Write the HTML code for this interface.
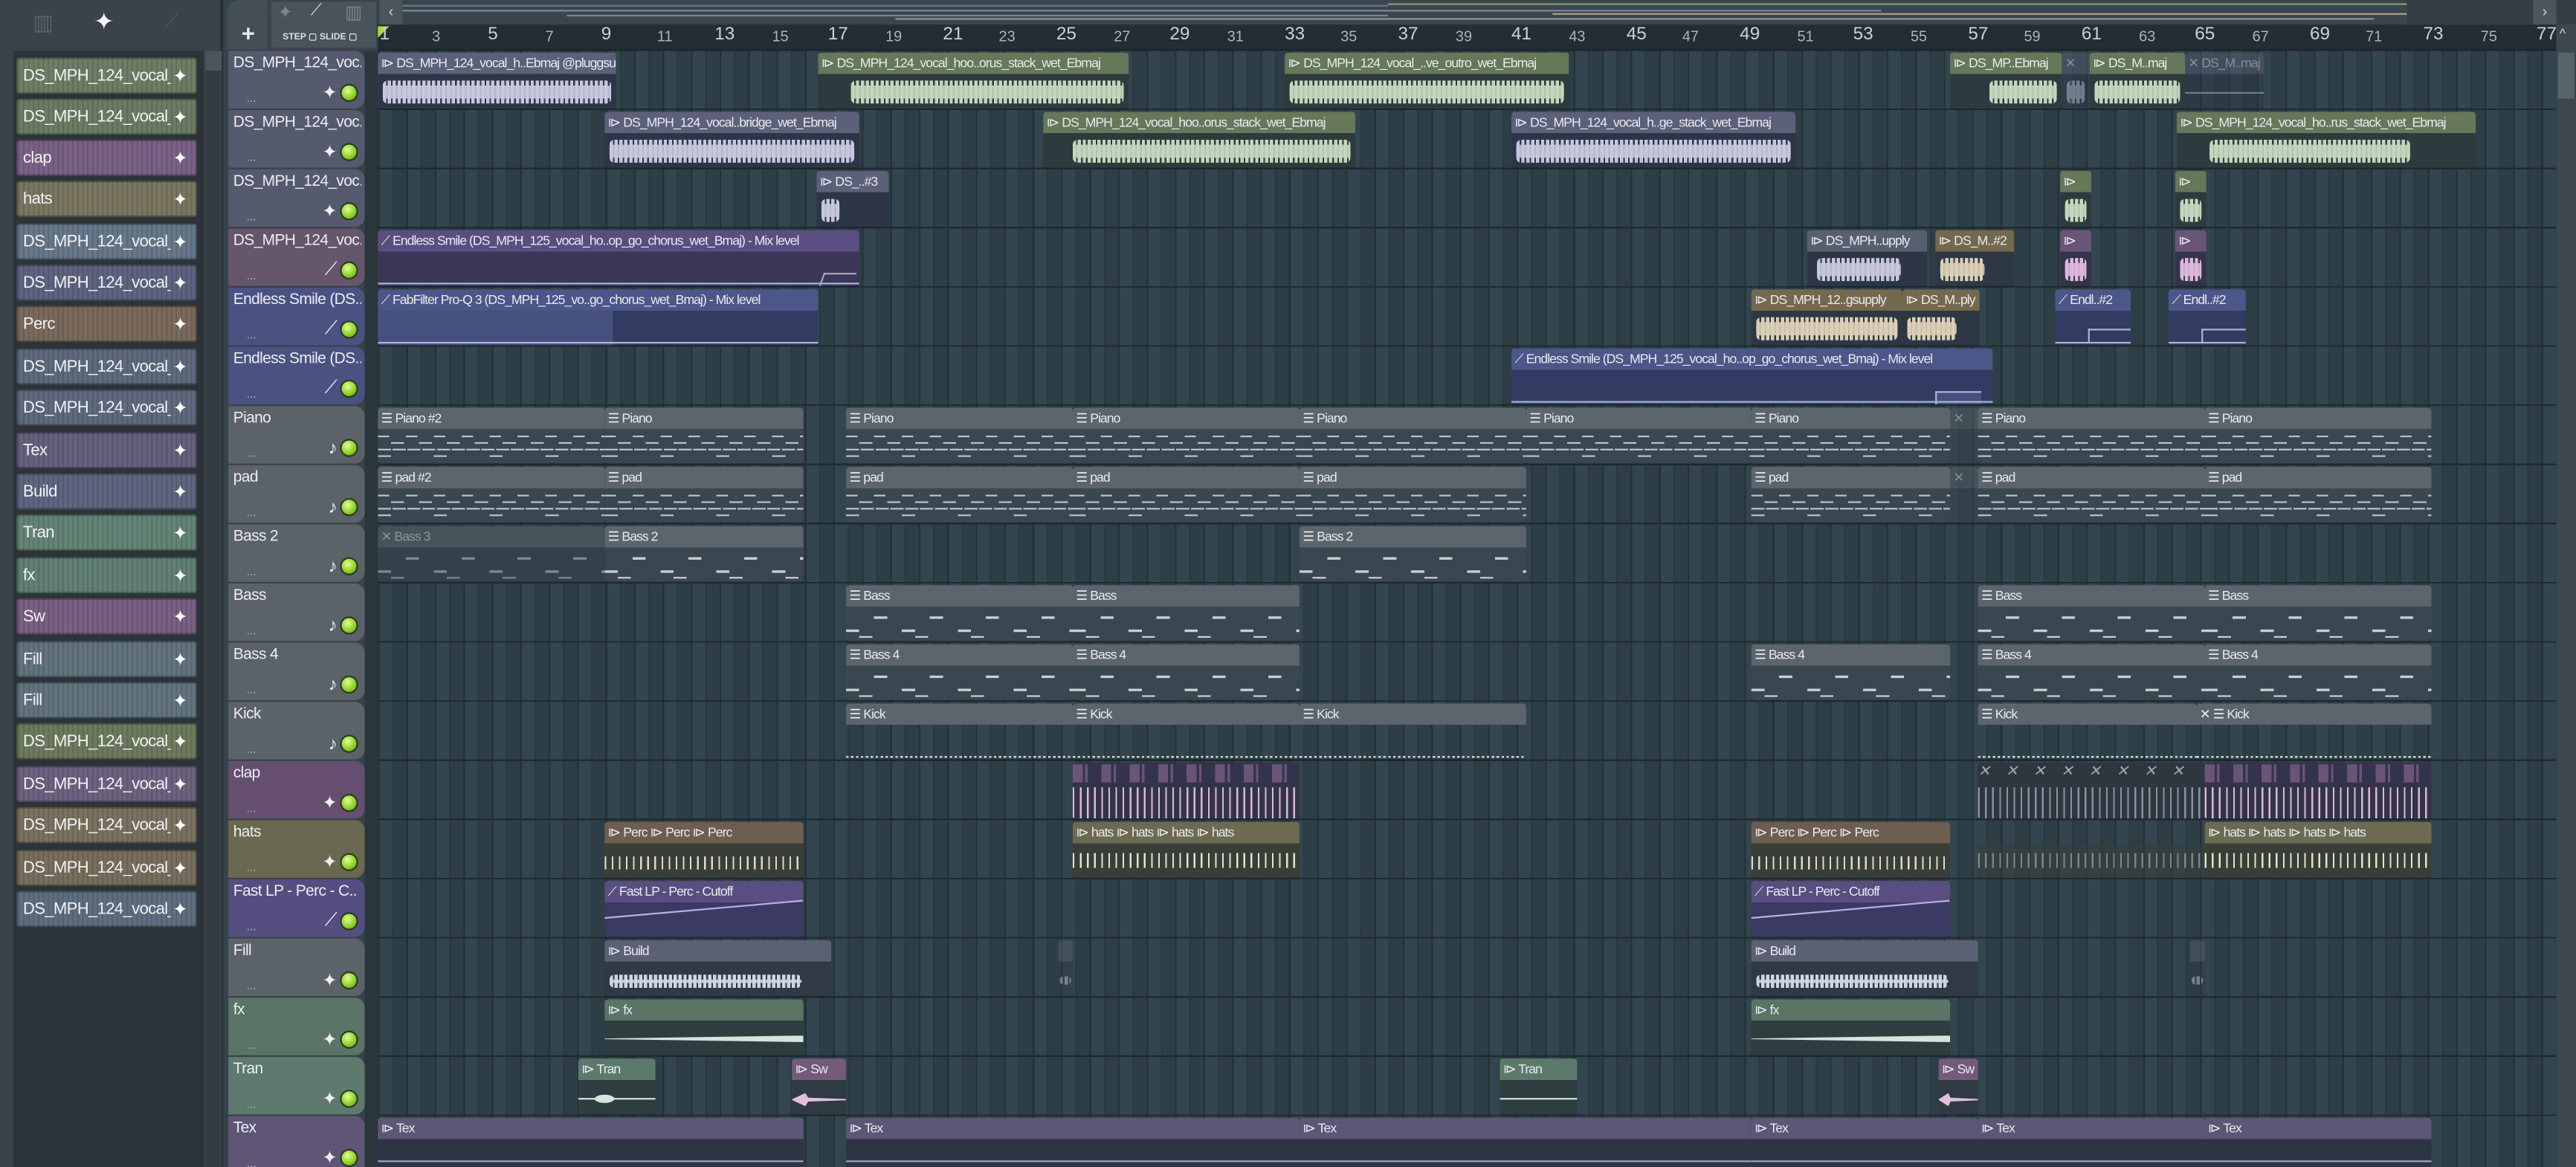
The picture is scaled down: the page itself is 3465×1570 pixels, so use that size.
<!DOCTYPE html>
<html><head><meta charset="utf-8"><style>
*{margin:0;padding:0;box-sizing:border-box}
html,body{width:3465px;height:1570px;overflow:hidden;background:#343e44}
#r{position:absolute;left:0;top:0;width:1568px;height:710px;transform:scale(2.2098,2.2113);transform-origin:0 0;font-family:"Liberation Sans Narrow","Liberation Sans",sans-serif;overflow:hidden;background:#343e44}
.abs{position:absolute}
#lp{position:absolute;left:0;top:0;width:136px;height:710px;background:#3a4349;border-right:2px solid #2b3237}
#list{position:absolute;left:8px;top:31px;width:116px;height:679px;background:#2c3439}
.li{position:absolute;left:10px;width:110px;height:22px;border-radius:2px;color:#f2f2f4;font-size:10px;line-height:22px;padding-left:3px;white-space:nowrap;overflow:hidden;border:1px solid rgba(0,0,0,.25);background-image:repeating-linear-gradient(90deg,rgba(0,0,0,.12) 0 1px,transparent 1px 3px);letter-spacing:-.3px}
.li span{display:block;width:90px;overflow:hidden}
.li:after{content:"✦";position:absolute;right:5px;top:0;color:#fff;font-size:11px}
#th{position:absolute;left:136px;top:0;width:94px;height:710px;background:#37434a}
.tr{position:absolute;left:139px;width:83px;height:35px;border-radius:0 6px 6px 0;color:#eceef2;font-size:9.5px;padding:2px 0 0 3px;white-space:nowrap;overflow:hidden;letter-spacing:-.3px}
.tr .t{display:block;width:78px;overflow:hidden}
.tr .d{position:absolute;left:11px;bottom:2px;font-size:8px;color:#9aa}
.tr .led{position:absolute;right:5px;bottom:5px;width:9px;height:9px;border-radius:50%;background:radial-gradient(circle at 40% 35%,#e0ff90,#8ccc28 60%,#5a8a18);box-shadow:0 0 0 1px #2a3a20}
.tr .ic{position:absolute;right:17px;bottom:3px;color:#f0f0f4;font-size:11px}
#pl{position:absolute;left:230px;top:31px;width:1326px;height:679px;background:
repeating-linear-gradient(180deg,transparent 0 35px,#1f2b31 35px 36px),
repeating-linear-gradient(90deg,#243138 0 1px,#33454e 1px 8.665px,#2a3940 8.665px 9.665px,#2e3e46 9.665px 17.33px)}
#gut{position:absolute;left:222px;top:31px;width:8px;height:679px;background:#2b363c}
#ruler{position:absolute;left:230px;top:15px;width:1326px;height:16px;background:#232e34;border-bottom:1px solid #1a2328}
.rn{position:absolute;top:2px;color:#a8b4bc;font-size:9px}
.rn.b{font-size:11px;top:0;color:#c8d2d8}
#mm{position:absolute;left:245px;top:0;width:1311px;height:15px;background:#3a464c}
#sb{position:absolute;left:1556px;top:15px;width:12px;height:695px;background:#3d484e}
.c{position:absolute;height:35px;background:linear-gradient(var(--h) 0 13px,var(--b) 13px);border-radius:2px;overflow:hidden;border-bottom:1px solid #1d272c}
.c b{font-weight:normal;display:block;height:13px;line-height:13px;font-size:8px;padding-left:2px;color:#e8eaf0;white-space:nowrap;overflow:hidden;letter-spacing:-.45px}
.c .w{position:absolute;left:3px;right:3px;top:17px;height:14px;background:repeating-linear-gradient(90deg,var(--w) 0 2px,transparent 2px 3px);border-radius:3px}
.c .w:before{content:"";position:absolute;left:0;right:0;top:3px;bottom:3px;background:var(--w);border-radius:2px;opacity:.9}
.c .ln{position:absolute;left:0;right:0;top:24px;height:1px;background:var(--w)}
.a{--h:#5c6078;--b:#2c3646;--w:#c6c6de}
.g{--h:#66775a;--b:#2d3b3e;--w:#c4d6bc}
.br{--h:#74684e;--b:#2e3844;--w:#dacfb6}
.pk{--h:#6a5478;--b:#33344a;--w:#dcb8dc}
.bl{--h:#4c5688;--b:#323c62;--w:#aab4d8}
.pu{--h:#5a4e80;--b:#3a3a62;--w:#b8b0e0}
.p{--h:#5c656c;--b:#3a4750;--w:#c0c8d0}
.ht{--h:#6c6a50;--b:#393e38;--w:#dcdcc4}
.pc{--h:#6e5e50;--b:#393e38;--w:#dcd4c4}
.fx{--h:#5a7466;--b:#2e3e40;--w:#d4e6dc}
.sw{--h:#735a7a;--b:#2f3a42;--w:#e0c0dc}
.tx{--h:#5e5676;--b:#2c3446;--w:#a0a6b8}
.bd{--h:#5c6074;--b:#2f3a44;--w:#d0d4e4}
.fd{opacity:.45}
.n{position:absolute;left:0;right:0;top:15px;bottom:2px;background:
repeating-linear-gradient(90deg,#b8c2ca 0 7px,transparent 7px 17px) 0 2px/100% 1px no-repeat,
repeating-linear-gradient(90deg,transparent 0 8px,#b8c2ca 8px 16px,transparent 16px 17px) 0 6px/100% 1px no-repeat,
repeating-linear-gradient(90deg,#b8c2ca 0 8px,transparent 8px 9px) 0 10px/100% 1px no-repeat,
repeating-linear-gradient(90deg,#b8c2ca 0 8px,transparent 8px 34px) 0 14px/100% 1px no-repeat,
repeating-linear-gradient(90deg,transparent 0 17px,#b8c2ca 17px 25px,transparent 25px 34px) 0 17px/100% 1px no-repeat,
repeating-linear-gradient(90deg,#8a949c 0 8px,transparent 8px 17px) 0 19px/100% 1px no-repeat}
.bn{position:absolute;left:0;right:0;top:15px;bottom:2px;background:
repeating-linear-gradient(90deg,transparent 0 17px,#c8d0d6 17px 25px,transparent 25px 34px) 0 4px/100% 1.5px no-repeat,
repeating-linear-gradient(90deg,#c8d0d6 0 8px,transparent 8px 34px) 0 12px/100% 1.5px no-repeat,
repeating-linear-gradient(90deg,transparent 0 8px,#c8d0d6 8px 16px,transparent 16px 34px) 0 16px/100% 1.5px no-repeat}
.kk{position:absolute;left:0;right:0;top:32px;height:1px;background:repeating-linear-gradient(90deg,#e0e6ea 0 1.5px,transparent 1.5px 3px)}
.sp{position:absolute;left:0;right:0;top:15px;height:19px;background:repeating-linear-gradient(90deg,var(--w) 0 1px,transparent 1px 4.33px)}
.ac{position:absolute;left:0;right:0;bottom:1px;height:1px;background:#aab4d8}
</style></head><body><div id="r">

<div id="lp">
 <div class="abs" style="left:20px;top:6px;color:#56626a;font-size:13px">▥</div>
 <div class="abs" style="left:57px;top:4px;color:#f4f4f8;font-size:15px">✦</div>
 <div class="abs" style="left:100px;top:6px;color:#4a565c;font-size:12px">⟋</div>
 <div id="list"></div>
 <div class="abs" style="left:125px;top:31px;width:10px;height:679px;background:#333c42"></div>
 <div class="abs" style="left:125px;top:31px;width:10px;height:12px;background:#4a555c"></div>
</div>
<div class="li" style="top:35px;background-color:#6e7e66"><span>DS_MPH_124_vocal_..</span></div>
<div class="li" style="top:60px;background-color:#6c7c64"><span>DS_MPH_124_vocal_..</span></div>
<div class="li" style="top:85px;background-color:#7a6286"><span>clap</span></div>
<div class="li" style="top:110px;background-color:#7a7660"><span>hats</span></div>
<div class="li" style="top:136px;background-color:#66788a"><span>DS_MPH_124_vocal_..</span></div>
<div class="li" style="top:161px;background-color:#5e6480"><span>DS_MPH_124_vocal_..</span></div>
<div class="li" style="top:186px;background-color:#7a6a5c"><span>Perc</span></div>
<div class="li" style="top:212px;background-color:#5e6a7e"><span>DS_MPH_124_vocal_..</span></div>
<div class="li" style="top:237px;background-color:#5e6a7e"><span>DS_MPH_124_vocal_..</span></div>
<div class="li" style="top:263px;background-color:#67607e"><span>Tex</span></div>
<div class="li" style="top:288px;background-color:#5f6680"><span>Build</span></div>
<div class="li" style="top:313px;background-color:#648476"><span>Tran</span></div>
<div class="li" style="top:339px;background-color:#628073"><span>fx</span></div>
<div class="li" style="top:364px;background-color:#7a6082"><span>Sw</span></div>
<div class="li" style="top:390px;background-color:#62747e"><span>Fill</span></div>
<div class="li" style="top:415px;background-color:#62747e"><span>Fill</span></div>
<div class="li" style="top:440px;background-color:#6c7a5e"><span>DS_MPH_124_vocal_..</span></div>
<div class="li" style="top:466px;background-color:#6e6280"><span>DS_MPH_124_vocal_..</span></div>
<div class="li" style="top:491px;background-color:#7a7260"><span>DS_MPH_124_vocal_..</span></div>
<div class="li" style="top:517px;background-color:#786e5c"><span>DS_MPH_124_vocal_..</span></div>
<div class="li" style="top:542px;background-color:#5e6e80"><span>DS_MPH_124_vocal_..</span></div>

<div id="th"></div>
<div class="abs" style="left:138px;top:0;width:25px;height:30px;background:#444e55;border-radius:8px 0 0 0"></div>
<div class="abs" style="left:147px;top:12px;color:#e8eaee;font-size:14px;font-weight:bold">+</div>
<div class="abs" style="left:164px;top:0;width:66px;height:30px;background:#48535a;border:1px solid #3a444a"></div>
<div class="abs" style="left:169px;top:1px;color:#7c868c;font-size:11px">✦</div>
<div class="abs" style="left:189px;top:1px;color:#dde;font-size:10px">⟋</div>
<div class="abs" style="left:210px;top:1px;color:#7c868c;font-size:11px">▥</div>
<div class="abs" style="left:172px;top:20px;color:#dde;font-size:5.5px;font-weight:bold">STEP ▢ SLIDE ▢</div>
<div class="abs" style="left:231px;top:0;width:14px;height:15px;background:#4a555c;color:#cfd6da;font-size:9px;text-align:center;line-height:15px">‹</div>
<div id="mm">
 <div class="abs" style="left:0;top:3px;width:600px;height:1px;background:#6a7a90"></div>
 <div class="abs" style="left:0;top:6px;width:900px;height:1px;background:#7c8a96"></div>
 <div class="abs" style="left:100px;top:9px;width:500px;height:1px;background:#8a7aa0"></div>
 <div class="abs" style="left:300px;top:11px;width:900px;height:1px;background:#8c96a0"></div>
 <div class="abs" style="left:600px;top:2px;width:700px;height:1px;background:#8a9a7a"></div>
 <div class="abs" style="left:700px;top:8px;width:600px;height:1px;background:#a8a090"></div>
 <div class="abs" style="left:1220px;top:0;width:91px;height:15px;background:#343e44"></div>
 <div class="abs" style="left:1297px;top:0;width:14px;height:15px;background:#4a555c;color:#cfd6da;font-size:9px;text-align:center;line-height:15px">›</div>
</div>
<div id="ruler">
<div class="abs" style="left:0;top:1px;width:0;height:0;border-left:7px solid #a8d838;border-bottom:7px solid transparent"></div>
<span class="rn b" style="left:1px">1</span><span class="rn" style="left:33px">3</span><span class="rn b" style="left:67px">5</span><span class="rn" style="left:102px">7</span><span class="rn b" style="left:136px">9</span><span class="rn" style="left:170px">11</span><span class="rn b" style="left:205px">13</span><span class="rn" style="left:240px">15</span><span class="rn b" style="left:274px">17</span><span class="rn" style="left:309px">19</span><span class="rn b" style="left:344px">21</span><span class="rn" style="left:378px">23</span><span class="rn b" style="left:413px">25</span><span class="rn" style="left:448px">27</span><span class="rn b" style="left:482px">29</span><span class="rn" style="left:517px">31</span><span class="rn b" style="left:552px">33</span><span class="rn" style="left:586px">35</span><span class="rn b" style="left:621px">37</span><span class="rn" style="left:656px">39</span><span class="rn b" style="left:690px">41</span><span class="rn" style="left:725px">43</span><span class="rn b" style="left:760px">45</span><span class="rn" style="left:794px">47</span><span class="rn b" style="left:829px">49</span><span class="rn" style="left:864px">51</span><span class="rn b" style="left:898px">53</span><span class="rn" style="left:933px">55</span><span class="rn b" style="left:968px">57</span><span class="rn" style="left:1002px">59</span><span class="rn b" style="left:1037px">61</span><span class="rn" style="left:1072px">63</span><span class="rn b" style="left:1106px">65</span><span class="rn" style="left:1141px">67</span><span class="rn b" style="left:1176px">69</span><span class="rn" style="left:1210px">71</span><span class="rn b" style="left:1245px">73</span><span class="rn" style="left:1280px">75</span><span class="rn b" style="left:1314px">77</span>
</div>
<div id="sb"><div class="abs" style="left:1px;top:17px;width:10px;height:28px;background:#56646c"></div><div class="abs" style="left:2px;top:1px;color:#cfd6da;font-size:8px">^</div></div>
<div id="gut"></div>
<div id="pl"></div>

<!-- track headers -->
<div class="tr" style="top:31px;background:#555a6e"><span class="t">DS_MPH_124_voc..</span><span class="d">...</span><span class="ic">✦</span><span class="led"></span></div>
<div class="tr" style="top:67px;background:#555a6e"><span class="t">DS_MPH_124_voc..</span><span class="d">...</span><span class="ic">✦</span><span class="led"></span></div>
<div class="tr" style="top:103px;background:#555a6e"><span class="t">DS_MPH_124_voc..</span><span class="d">...</span><span class="ic">✦</span><span class="led"></span></div>
<div class="tr" style="top:139px;background:#65566a"><span class="t">DS_MPH_124_voc..</span><span class="d">...</span><span class="ic">⟋</span><span class="led"></span></div>
<div class="tr" style="top:175px;background:#4a5282"><span class="t">Endless Smile (DS..</span><span class="d">...</span><span class="ic">⟋</span><span class="led"></span></div>
<div class="tr" style="top:211px;background:#4a5282"><span class="t">Endless Smile (DS..</span><span class="d">...</span><span class="ic">⟋</span><span class="led"></span></div>
<div class="tr" style="top:247px;background:#5b6268"><span class="t">Piano</span><span class="d">...</span><span class="ic">♪</span><span class="led"></span></div>
<div class="tr" style="top:283px;background:#5b6268"><span class="t">pad</span><span class="d">...</span><span class="ic">♪</span><span class="led"></span></div>
<div class="tr" style="top:319px;background:#5b6268"><span class="t">Bass 2</span><span class="d">...</span><span class="ic">♪</span><span class="led"></span></div>
<div class="tr" style="top:355px;background:#5b6268"><span class="t">Bass</span><span class="d">...</span><span class="ic">♪</span><span class="led"></span></div>
<div class="tr" style="top:391px;background:#5b6268"><span class="t">Bass 4</span><span class="d">...</span><span class="ic">♪</span><span class="led"></span></div>
<div class="tr" style="top:427px;background:#5b6268"><span class="t">Kick</span><span class="d">...</span><span class="ic">♪</span><span class="led"></span></div>
<div class="tr" style="top:463px;background:#654e70"><span class="t">clap</span><span class="d">...</span><span class="ic">✦</span><span class="led"></span></div>
<div class="tr" style="top:499px;background:#6a6850"><span class="t">hats</span><span class="d">...</span><span class="ic">✦</span><span class="led"></span></div>
<div class="tr" style="top:535px;background:#554e80"><span class="t">Fast LP - Perc - C..</span><span class="d">...</span><span class="ic">⟋</span><span class="led"></span></div>
<div class="tr" style="top:571px;background:#5b6268"><span class="t">Fill</span><span class="d">...</span><span class="ic">✦</span><span class="led"></span></div>
<div class="tr" style="top:607px;background:#5a7468"><span class="t">fx</span><span class="d">...</span><span class="ic">✦</span><span class="led"></span></div>
<div class="tr" style="top:643px;background:#5e7a6e"><span class="t">Tran</span><span class="d">...</span><span class="ic">✦</span><span class="led"></span></div>
<div class="tr" style="top:679px;background:#5e5674"><span class="t">Tex</span><span class="d">...</span><span class="ic">✦</span><span class="led"></span></div>

<!-- row 0 -->
<div class="c a" style="left:230px;top:32px;width:145px"><b>⧐ DS_MPH_124_vocal_h..Ebmaj @pluggsupply</b><i class="w"></i></div>
<div class="c g" style="left:498px;top:32px;width:189px"><b>⧐ DS_MPH_124_vocal_hoo..orus_stack_wet_Ebmaj</b><i class="w" style="left:20px"></i></div>
<div class="c g" style="left:782px;top:32px;width:173px"><b>⧐ DS_MPH_124_vocal_..ve_outro_wet_Ebmaj</b><i class="w"></i></div>
<div class="c g" style="left:1187px;top:32px;width:68px"><b>⧐ DS_MP..Ebmaj</b><i class="w" style="left:24px"></i></div>
<div class="c a fd" style="left:1255px;top:32px;width:17px"><b>✕</b><i class="w"></i></div>
<div class="c g" style="left:1272px;top:32px;width:58px"><b>⧐ DS_M..maj</b><i class="w"></i></div>
<div class="c a fd" style="left:1330px;top:32px;width:48px"><b>✕ DS_M..maj</b><i class="ln"></i></div>
<!-- row 1 -->
<div class="c a" style="left:368px;top:68px;width:155px"><b>⧐ DS_MPH_124_vocal..bridge_wet_Ebmaj</b><i class="w"></i></div>
<div class="c g" style="left:635px;top:68px;width:190px"><b>⧐ DS_MPH_124_vocal_hoo..orus_stack_wet_Ebmaj</b><i class="w" style="left:18px"></i></div>
<div class="c a" style="left:920px;top:68px;width:173px"><b>⧐ DS_MPH_124_vocal_h..ge_stack_wet_Ebmaj</b><i class="w"></i></div>
<div class="c g" style="left:1325px;top:68px;width:182px"><b>⧐ DS_MPH_124_vocal_ho..rus_stack_wet_Ebmaj</b><i class="w" style="left:20px;right:40px"></i></div>
<!-- row 2 -->
<div class="c a" style="left:497px;top:104px;width:44px"><b>⧐ DS_..#3</b><i class="w" style="right:30px"></i></div>
<div class="c g" style="left:1254px;top:104px;width:19px"><b>⧐</b><i class="w"></i></div>
<div class="c g" style="left:1324px;top:104px;width:19px"><b>⧐</b><i class="w"></i></div>
<!-- row 3 -->
<div class="c pu" style="left:230px;top:140px;width:293px;--b:#3c3658"><b>⟋ Endless Smile (DS_MPH_125_vocal_ho..op_go_chorus_wet_Bmaj) - Mix level</b><i class="ac"></i><i class="abs" style="left:270px;top:26px;width:20px;height:8px;border-top:1px solid #aab;border-left:1px solid #aab;transform:skewX(-20deg)"></i></div>
<div class="c a" style="left:1100px;top:140px;width:73px;--h:#586070"><b>⧐ DS_MPH..upply</b><i class="w" style="left:6px;right:16px"></i></div>
<div class="c br" style="left:1178px;top:140px;width:48px"><b>⧐ DS_M..#2</b><i class="w" style="right:18px"></i></div>
<div class="c pk" style="left:1254px;top:140px;width:19px"><b>⧐</b><i class="w"></i></div>
<div class="c pk" style="left:1324px;top:140px;width:19px"><b>⧐</b><i class="w"></i></div>
<!-- row 4 -->
<div class="c bl" style="left:230px;top:176px;width:268px"><b>⟋ FabFilter Pro-Q 3 (DS_MPH_125_vo..go_chorus_wet_Bmaj) - Mix level</b><i class="abs" style="left:0;top:13px;width:143px;height:22px;background:#46507c"></i><i class="ac"></i></div>
<div class="c br" style="left:1066px;top:176px;width:92px"><b>⧐ DS_MPH_12..gsupply</b><i class="w"></i></div>
<div class="c br" style="left:1158px;top:176px;width:47px"><b>⧐ DS_M..ply</b><i class="w" style="right:14px"></i></div>
<div class="c bl" style="left:1251px;top:176px;width:46px"><b>⟋ Endl..#2</b><i class="abs" style="left:20px;top:24px;width:26px;height:8px;border-top:1px solid #aab4d8;border-left:1px solid #aab4d8"></i><i class="ac"></i></div>
<div class="c bl" style="left:1320px;top:176px;width:47px"><b>⟋ Endl..#2</b><i class="abs" style="left:20px;top:24px;width:27px;height:8px;border-top:1px solid #aab4d8;border-left:1px solid #aab4d8"></i><i class="ac"></i></div>
<!-- row 5 -->
<div class="c bl" style="left:920px;top:212px;width:293px"><b>⟋ Endless Smile (DS_MPH_125_vocal_ho..op_go_chorus_wet_Bmaj) - Mix level</b><i class="abs" style="left:258px;top:26px;width:28px;height:8px;border-top:1px solid #aab4d8;border-left:1px solid #aab4d8;background:#46507c"></i><i class="ac"></i></div>
<!-- row 6 Piano -->
<div class="c p" style="left:230px;top:248px;width:138px"><b>☰ Piano #2</b><i class="n"></i></div>
<div class="c p" style="left:368px;top:248px;width:121px"><b>☰ Piano</b><i class="n"></i></div>
<div class="c p" style="left:515px;top:248px;width:138px"><b>☰ Piano</b><i class="n"></i></div>
<div class="c p" style="left:653px;top:248px;width:138px"><b>☰ Piano</b><i class="n"></i></div>
<div class="c p" style="left:791px;top:248px;width:138px"><b>☰ Piano</b><i class="n"></i></div>
<div class="c p" style="left:929px;top:248px;width:137px"><b>☰ Piano</b><i class="n"></i></div>
<div class="c p" style="left:1066px;top:248px;width:121px"><b>☰ Piano</b><i class="n"></i></div>
<div class="c p fd" style="left:1187px;top:248px;width:17px"><b>✕</b></div>
<div class="c p" style="left:1204px;top:248px;width:138px"><b>☰ Piano</b><i class="n"></i></div>
<div class="c p" style="left:1342px;top:248px;width:138px"><b>☰ Piano</b><i class="n"></i></div>
<!-- row 7 pad -->
<div class="c p" style="left:230px;top:284px;width:138px"><b>☰ pad #2</b><i class="n"></i></div>
<div class="c p" style="left:368px;top:284px;width:121px"><b>☰ pad</b><i class="n"></i></div>
<div class="c p" style="left:515px;top:284px;width:138px"><b>☰ pad</b><i class="n"></i></div>
<div class="c p" style="left:653px;top:284px;width:138px"><b>☰ pad</b><i class="n"></i></div>
<div class="c p" style="left:791px;top:284px;width:138px"><b>☰ pad</b><i class="n"></i></div>
<div class="c p" style="left:1066px;top:284px;width:121px"><b>☰ pad</b><i class="n"></i></div>
<div class="c p fd" style="left:1187px;top:284px;width:17px"><b>✕</b></div>
<div class="c p" style="left:1204px;top:284px;width:138px"><b>☰ pad</b><i class="n"></i></div>
<div class="c p" style="left:1342px;top:284px;width:138px"><b>☰ pad</b><i class="n"></i></div>
<!-- row 8 Bass 2 -->
<div class="c p" style="left:230px;top:320px;width:138px;--h:#46535a;--b:#33424a"><b style="color:#8a969c">✕ Bass 3</b><i class="bn" style="opacity:.5"></i></div>
<div class="c p" style="left:368px;top:320px;width:121px"><b>☰ Bass 2</b><i class="bn"></i></div>
<div class="c p" style="left:791px;top:320px;width:138px"><b>☰ Bass 2</b><i class="bn"></i></div>
<!-- row 9 Bass -->
<div class="c p" style="left:515px;top:356px;width:138px"><b>☰ Bass</b><i class="bn"></i></div>
<div class="c p" style="left:653px;top:356px;width:138px"><b>☰ Bass</b><i class="bn"></i></div>
<div class="c p" style="left:1204px;top:356px;width:138px"><b>☰ Bass</b><i class="bn"></i></div>
<div class="c p" style="left:1342px;top:356px;width:138px"><b>☰ Bass</b><i class="bn"></i></div>
<!-- row 10 Bass 4 -->
<div class="c p" style="left:515px;top:392px;width:138px"><b>☰ Bass 4</b><i class="bn"></i></div>
<div class="c p" style="left:653px;top:392px;width:138px"><b>☰ Bass 4</b><i class="bn"></i></div>
<div class="c p" style="left:1066px;top:392px;width:121px"><b>☰ Bass 4</b><i class="bn"></i></div>
<div class="c p" style="left:1204px;top:392px;width:138px"><b>☰ Bass 4</b><i class="bn"></i></div>
<div class="c p" style="left:1342px;top:392px;width:138px"><b>☰ Bass 4</b><i class="bn"></i></div>
<!-- row 11 Kick -->
<div class="c p" style="left:515px;top:428px;width:138px;--b:transparent"><b>☰ Kick</b><i class="kk"></i></div>
<div class="c p" style="left:653px;top:428px;width:138px;--b:transparent"><b>☰ Kick</b><i class="kk"></i></div>
<div class="c p" style="left:791px;top:428px;width:138px;--b:transparent"><b>☰ Kick</b><i class="kk"></i></div>
<div class="c p" style="left:1204px;top:428px;width:133px;--b:transparent"><b>☰ Kick</b><i class="kk"></i></div>
<div class="c p" style="left:1337px;top:428px;width:143px;--b:transparent"><b>✕ ☰ Kick</b><i class="kk"></i></div>
<!-- row 12 clap -->
<div class="c pk" style="left:653px;top:464px;width:138px;background:linear-gradient(#33344a,#33344a)"><i class="abs" style="left:0;right:0;top:1px;height:11px;background:repeating-linear-gradient(90deg,#6a5478 0 6px,transparent 6px 7.5px,#6a5478 7.5px 9px,transparent 9px 17.33px)"></i><i class="sp"></i></div>
<div class="c a" style="left:1204px;top:464px;width:138px;background:#2e3640"><i class="abs" style="left:0;top:0;right:0;height:13px;color:#a0a8b0;font-size:9px;letter-spacing:9.3px;white-space:nowrap;overflow:hidden">✕✕✕✕✕✕✕✕</i><i class="sp" style="--w:#8a92a0"></i></div>
<div class="c pk" style="left:1342px;top:464px;width:138px;background:linear-gradient(#33344a,#33344a)"><i class="abs" style="left:0;right:0;top:1px;height:11px;background:repeating-linear-gradient(90deg,#6a5478 0 6px,transparent 6px 7.5px,#6a5478 7.5px 9px,transparent 9px 17.33px)"></i><i class="sp"></i></div>
<!-- row 13 hats -->
<div class="c pc" style="left:368px;top:500px;width:121px"><b>⧐ Perc ⧐ Perc ⧐ Perc</b><i class="sp" style="top:21px;height:8px;--w:#e0d8c8"></i></div>
<div class="c ht" style="left:653px;top:500px;width:138px"><b>⧐ hats ⧐ hats ⧐ hats ⧐ hats</b><i class="sp" style="top:19px;height:9px;--w:#e4e4cc"></i></div>
<div class="c pc" style="left:1066px;top:500px;width:121px"><b>⧐ Perc ⧐ Perc ⧐ Perc</b><i class="sp" style="top:21px;height:8px;--w:#e0d8c8"></i></div>
<div class="c ht fd" style="left:1204px;top:500px;width:138px;--h:transparent"><i class="sp" style="top:19px;height:9px"></i></div>
<div class="c ht" style="left:1342px;top:500px;width:138px"><b>⧐ hats ⧐ hats ⧐ hats ⧐ hats</b><i class="sp" style="top:19px;height:9px;--w:#e4e4cc"></i></div>
<!-- row 14 -->
<div class="c pu" style="left:368px;top:536px;width:121px"><b>⟋ Fast LP - Perc - Cutoff</b><i class="abs" style="left:0;top:22px;width:121px;height:1px;background:#b8b0e0;transform:rotate(-5deg);transform-origin:0 0"></i></div>
<div class="c pu" style="left:1066px;top:536px;width:121px"><b>⟋ Fast LP - Perc - Cutoff</b><i class="abs" style="left:0;top:22px;width:121px;height:1px;background:#b8b0e0;transform:rotate(-5deg);transform-origin:0 0"></i></div>
<!-- row 15 Fill -->
<div class="c bd" style="left:368px;top:572px;width:138px"><b>⧐ Build</b><i class="w" style="right:18px;top:21px;height:8px"></i></div>
<div class="c bd fd" style="left:644px;top:572px;width:9px"><b></b><i class="w" style="left:1px;right:1px;top:22px;height:5px"></i></div>
<div class="c bd" style="left:1066px;top:572px;width:138px"><b>⧐ Build</b><i class="w" style="right:18px;top:21px;height:8px"></i></div>
<div class="c bd fd" style="left:1333px;top:572px;width:9px"><b></b><i class="w" style="left:1px;right:1px;top:22px;height:5px"></i></div>
<!-- row 16 fx -->
<div class="c fx" style="left:368px;top:608px;width:121px"><b>⧐ fx</b><i class="abs" style="left:0;right:0;top:22px;height:4px;background:#d4e6dc;clip-path:polygon(0 45%,100% 0,100% 100%,0 55%)"></i></div>
<div class="c fx" style="left:1066px;top:608px;width:121px"><b>⧐ fx</b><i class="abs" style="left:0;right:0;top:22px;height:4px;background:#d4e6dc;clip-path:polygon(0 45%,100% 0,100% 100%,0 55%)"></i></div>
<!-- row 17 Tran -->
<div class="c fx" style="left:352px;top:644px;width:47px;--h:#5c7a6c"><b>⧐ Tran</b><i class="abs" style="left:0;right:0;top:24px;height:1px;background:#d4e6dc"></i><i class="abs" style="left:10px;top:22px;width:12px;height:5px;background:#d4e6dc;border-radius:50%"></i></div>
<div class="c sw" style="left:482px;top:644px;width:33px"><b>⧐ Sw</b><i class="abs" style="left:0;right:0;top:21px;height:8px;background:#e0c0dc;clip-path:polygon(0 48%,25% 0,30% 35%,100% 45%,100% 55%,30% 65%,25% 100%,0 52%)"></i></div>
<div class="c fx" style="left:913px;top:644px;width:47px;--h:#5c7a6c"><b>⧐ Tran</b><i class="abs" style="left:0;right:0;top:24px;height:1px;background:#d4e6dc"></i></div>
<div class="c sw" style="left:1180px;top:644px;width:24px"><b>⧐ Sw</b><i class="abs" style="left:0;right:0;top:21px;height:8px;background:#e0c0dc;clip-path:polygon(0 48%,25% 0,30% 35%,100% 45%,100% 55%,30% 65%,25% 100%,0 52%)"></i></div>
<!-- row 18 Tex -->
<div class="c tx" style="left:230px;top:680px;width:259px"><b>⧐ Tex</b><i class="abs" style="left:0;right:0;top:26px;height:1px;background:#a0a6b8"></i></div>
<div class="c tx" style="left:515px;top:680px;width:276px"><b>⧐ Tex</b><i class="abs" style="left:0;right:0;top:26px;height:1px;background:#a0a6b8"></i></div>
<div class="c tx" style="left:791px;top:680px;width:275px"><b>⧐ Tex</b><i class="abs" style="left:0;right:0;top:26px;height:1px;background:#a0a6b8"></i></div>
<div class="c tx" style="left:1066px;top:680px;width:138px"><b>⧐ Tex</b><i class="abs" style="left:0;right:0;top:26px;height:1px;background:#a0a6b8"></i></div>
<div class="c tx" style="left:1204px;top:680px;width:138px"><b>⧐ Tex</b><i class="abs" style="left:0;right:0;top:26px;height:1px;background:#a0a6b8"></i></div>
<div class="c tx" style="left:1342px;top:680px;width:138px"><b>⧐ Tex</b><i class="abs" style="left:0;right:0;top:26px;height:1px;background:#a0a6b8"></i></div>

</div></body></html>
